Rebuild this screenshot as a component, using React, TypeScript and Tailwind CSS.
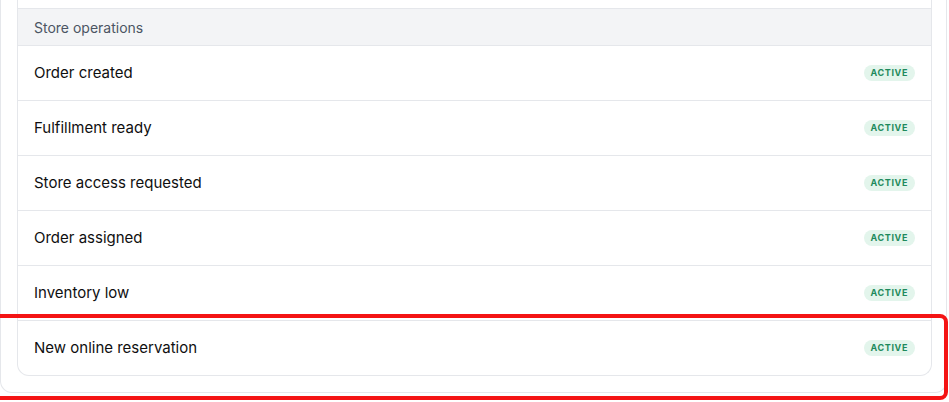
const rows = [
  "Order created",
  "Fulfillment ready",
  "Store access requested",
  "Order assigned",
  "Inventory low",
  "New online reservation",
];

function StatusBadge() {
  return (
    <span className="inline-flex h-4 items-center rounded-full bg-[#e3f5ec] px-[7px] text-[9px] font-bold tracking-[0.07em] text-[#1e8a5c]">
      ACTIVE
    </span>
  );
}

export default function App() {
  return (
    <div
      className="relative h-[402px] w-[949px] overflow-hidden bg-white"
      style={{ fontFamily: "Inter, 'Noto Sans', sans-serif" }}
    >
      <div className="w-[947px] rounded-b-xl border border-t-0 border-[#e5e7eb] pb-4 pl-4">
        <div className="w-[915px] overflow-hidden rounded-b-xl border border-t-0 border-[#e5e7eb]">
          <div className="h-[9px] border-b border-[#e5e7eb]" />
          <div className="flex h-[37px] items-center border-b border-[#e5e7eb] bg-[#f3f4f6] px-4 text-[14px] text-[#4b5563]">
            Store operations
          </div>
          {rows.map((name, i) => (
            <div
              key={name}
              className={
                i < rows.length - 1
                  ? "flex h-[55px] items-center justify-between border-b border-[#e5e7eb] pl-4 pr-4"
                  : "flex h-[54px] items-center justify-between pl-4 pr-4"
              }
            >
              <span className="text-[15px] text-[#0f0f10]">{name}</span>
              <StatusBadge />
            </div>
          ))}
        </div>
      </div>
      <div className="pointer-events-none absolute left-[-10px] top-[314px] h-[86px] w-[958px] rounded-[8px] border-4 border-[#f41414]" />
    </div>
  );
}
